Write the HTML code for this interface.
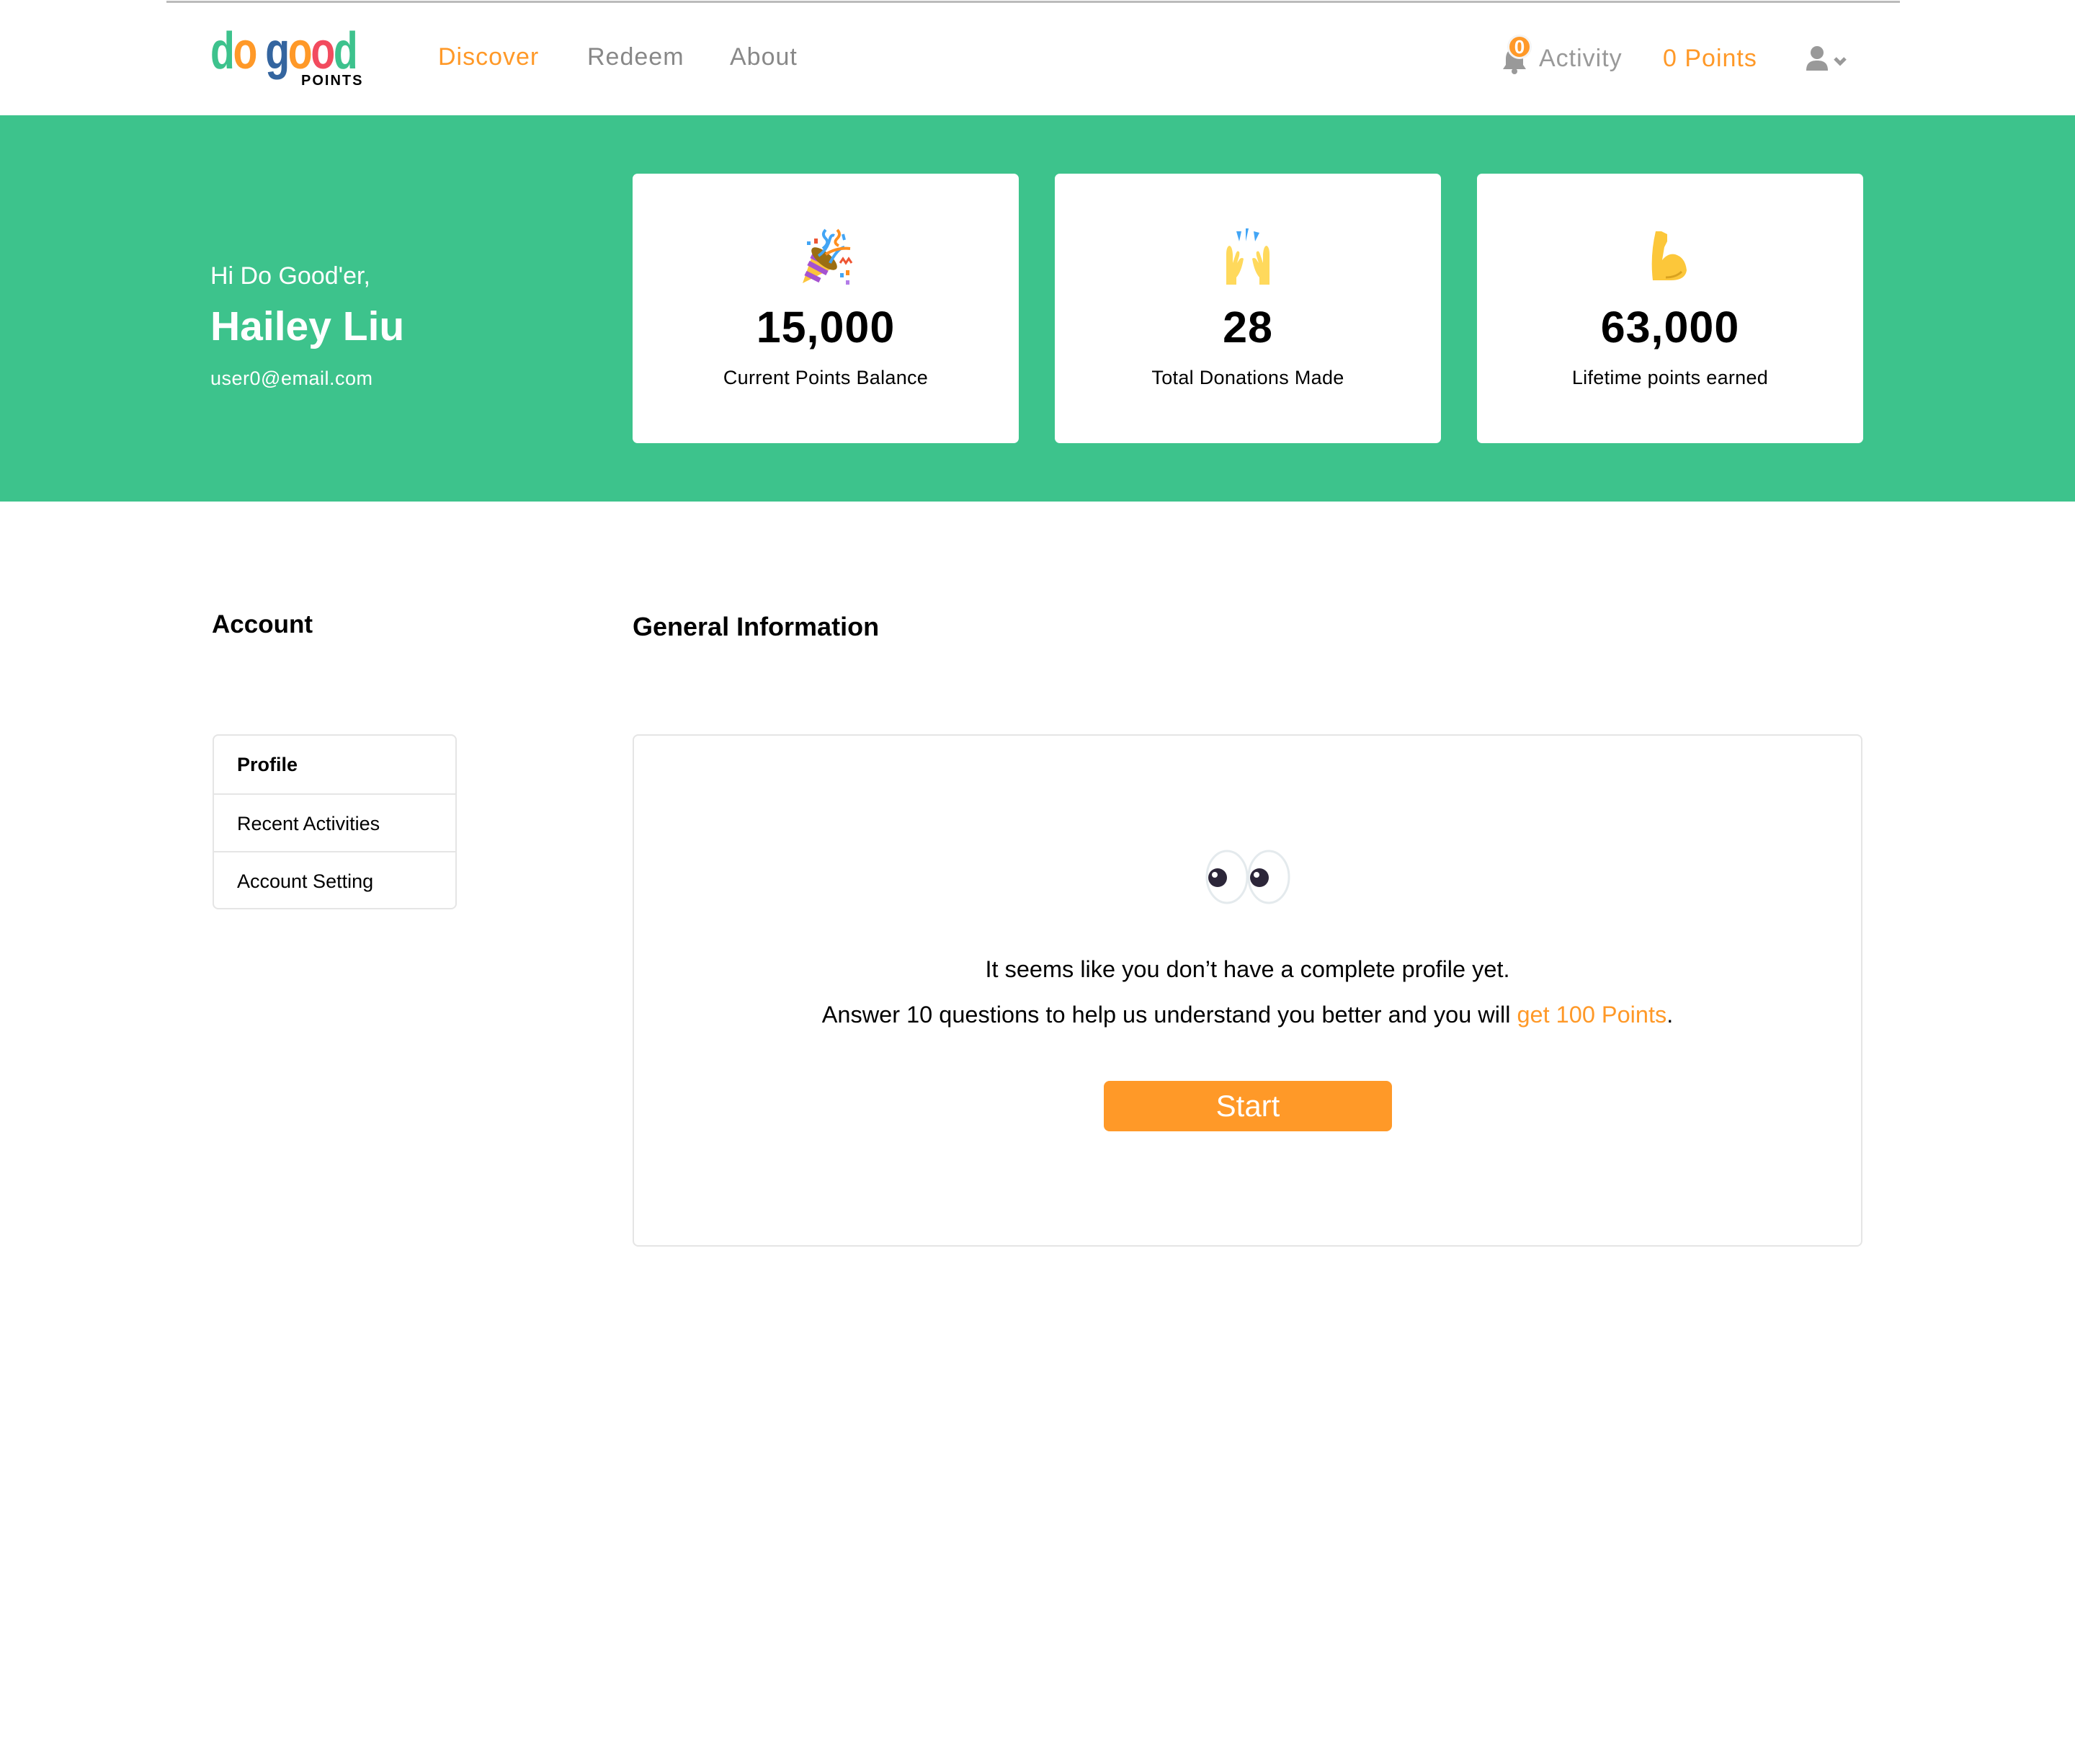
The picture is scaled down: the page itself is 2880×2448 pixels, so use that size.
<!DOCTYPE html>
<html><head><meta charset="utf-8"><style>
*{margin:0;padding:0;box-sizing:border-box}
body{width:2880px;height:2448px;background:#fff;font-family:"Liberation Sans",sans-serif;position:relative;overflow:hidden;color:#000}
.a{position:absolute;white-space:nowrap}
.nav{font-size:34px;color:#888;top:60px;letter-spacing:1px}
.card{position:absolute;top:241px;width:536px;height:374px;background:#fff;border-radius:7px;text-align:center}
.card .num{position:absolute;top:178px;left:0;right:0;font-size:61px;font-weight:bold;letter-spacing:1px}
.card .lbl{position:absolute;top:268px;left:0;right:0;font-size:27px;letter-spacing:.3px}
.card svg{position:absolute;left:228px;top:76px}
.row{position:absolute;left:0;right:0;height:80px;line-height:80px;padding-left:32px;font-size:27px}
</style></head><body>
<div class="a" style="left:231px;top:1px;width:2406px;height:3px;background:#bbb"></div>
<!-- logo -->
<div class="a" style="left:292px;top:30px;font-size:72px;font-weight:bold;letter-spacing:-3px;transform:scaleX(.77);transform-origin:left">
<span style="color:#3dc28d">d</span><span style="color:#ff9928">o</span> <span style="color:#34659f">g</span><span style="color:#ff9928">o</span><span style="color:#f24b5e">o</span><span style="color:#3dc28d">d</span></div>
<div class="a" style="left:418px;top:101px;font-size:20px;font-weight:bold;letter-spacing:2px">POINTS</div>
<div class="a nav" style="left:608px;color:#ff9928">Discover</div>
<div class="a nav" style="left:815px">Redeem</div>
<div class="a nav" style="left:1013px">About</div>
<!-- bell -->
<svg class="a" style="left:2082px;top:62px" width="40" height="42" viewBox="0 0 40 42"><path d="M16 6c-6 2-8 8-8 14v8l-4 6h32l-4-6v-8c0-6-3-12-9-14z" fill="#999"/><circle cx="20" cy="37" r="4" fill="#999"/></svg>
<div class="a" style="left:2092px;top:48px;width:34px;height:34px;border-radius:50%;background:#ff9928;border:3px solid #f5f5f5;color:#fff;font-size:26px;font-weight:bold;text-align:center;line-height:28px">0</div>
<div class="a nav" style="left:2136px;top:62px;color:#999">Activity</div>
<div class="a nav" style="left:2308px;top:62px;color:#ff9928">0 Points</div>
<svg class="a" style="left:2507px;top:64px" width="80" height="36" viewBox="0 0 80 36"><circle cx="15" cy="9" r="9" fill="#999"/><path d="M0 34c0-10 5-14 15-14s15 4 15 14z" fill="#999"/><path d="M40 17l7 7 7-7" stroke="#999" stroke-width="5" fill="none"/></svg>
<!-- green band -->
<div class="a" style="left:0;top:160px;width:2880px;height:536px;background:#3dc38c"></div>
<div class="a" style="left:292px;top:364px;font-size:34px;color:#fff">Hi Do Good'er,</div>
<div class="a" style="left:292px;top:420px;font-size:57px;font-weight:bold;color:#fff">Hailey Liu</div>
<div class="a" style="left:292px;top:510px;font-size:27px;color:#fff;letter-spacing:.5px">user0@email.com</div>
<div class="card" style="left:878px">
<svg width="80" height="80" viewBox="0 0 80 80"><path d="M8 76L24 30 L52 54z" fill="#fcc53b"/><path d="M12 62l20 10M16 48l26 14M20 38l24 12" stroke="#a552d0" stroke-width="7"/><ellipse cx="38" cy="42" rx="22" ry="9" transform="rotate(40 38 42)" fill="#9b6e12"/><path d="M40 2q-6 6 0 12t-4 14M30 38q12-8 16-24 2-6 6-4M46 48q10-20 20-22M64 8l2 8" stroke="#42a5f5" stroke-width="4" fill="none"/><path d="M56 2q6 6 0 12t2 10M40 36q16-10 34-8" stroke="#ff8f1f" stroke-width="4" fill="none"/><path d="M60 48l4-6 4 6 4-6 4 6" stroke="#e53" stroke-width="3" fill="none"/><rect x="14" y="18" width="5" height="5" fill="#42a5f5"/><rect x="24" y="14" width="5" height="7" fill="#e53"/><rect x="68" y="58" width="5" height="7" fill="#ff8f1f"/><rect x="60" y="62" width="5" height="6" fill="#42a5f5"/><rect x="68" y="72" width="5" height="6" fill="#b37ce8"/></svg>
<div class="num">15,000</div><div class="lbl">Current Points Balance</div></div>
<div class="card" style="left:1464px">
<svg width="80" height="80" viewBox="0 0 80 80"><path d="M24 4l4 14 3-14zM37 0v18l4-18zM48 4l2 14 6-12z" fill="#42a5f5"/><path d="M10 78V36q0-10 4-12 4 0 5 12v12l4-12q2-6 4-4 2 0 1 6l-3 10 4-6q3-2 5 0-3 18-10 26v10z" fill="#ffd95c"/><path d="M70 78V36q0-10-4-12-4 0-5 12v12l-4-12q-2-6-4-4-2 0-1 6l3 10-4-6q-3-2-5 0 3 18 10 26v10z" fill="#ffd95c"/></svg>
<div class="num">28</div><div class="lbl">Total Donations Made</div></div>
<div class="card" style="left:2050px">
<svg width="80" height="80" viewBox="0 0 80 80"><path d="M20 4h8l8 4v10l-4 8-3 18q8-10 18-8 14 4 16 22-2 14-22 14H16q-4-34 4-68z" fill="#fcc73a"/><path d="M34 68q14 0 22-8" stroke="#d9a21f" stroke-width="3" fill="none"/></svg>
<div class="num">63,000</div><div class="lbl">Lifetime points earned</div></div>
<!-- headings -->
<div class="a" style="left:294px;top:847px;font-size:35px;font-weight:bold">Account</div>
<div class="a" style="left:878px;top:849px;font-size:36px;font-weight:bold">General Information</div>
<!-- sidebar -->
<div class="a" style="left:295px;top:1019px;width:339px;height:243px;border:2px solid #e5e5e5;border-radius:8px">
<div class="row" style="top:0;font-weight:bold">Profile</div>
<div class="row" style="top:80px;border-top:2px solid #e5e5e5">Recent Activities</div>
<div class="row" style="top:160px;border-top:2px solid #e5e5e5">Account Setting</div>
</div>
<!-- main box -->
<div class="a" style="left:878px;top:1019px;width:1707px;height:711px;border:2px solid #e5e5e5;border-radius:8px"></div>
<svg class="a" style="left:1673px;top:1177px" width="120" height="80" viewBox="0 0 120 80"><ellipse cx="30" cy="40" rx="28" ry="36" fill="#fff" stroke="#e4eaed" stroke-width="3"/><ellipse cx="88" cy="40" rx="28" ry="36" fill="#fff" stroke="#e4eaed" stroke-width="3"/><circle cx="17" cy="41" r="13" fill="#2c2639"/><circle cx="75" cy="41" r="13" fill="#2c2639"/><circle cx="13" cy="37" r="4" fill="#fff"/><circle cx="71" cy="37" r="4" fill="#fff"/></svg>
<div class="a" style="left:878px;width:1707px;top:1327px;text-align:center;font-size:32.5px">It seems like you don’t have a complete profile yet.</div>
<div class="a" style="left:878px;width:1707px;top:1390px;text-align:center;font-size:32.5px">Answer 10 questions to help us understand you better and you will <span style="color:#ff9928">get 100 Points</span>.</div>
<div class="a" style="left:1532px;top:1500px;width:400px;height:70px;background:#ff9928;border-radius:8px;color:#fff;font-size:42px;text-align:center;line-height:70px">Start</div>
</body></html>
